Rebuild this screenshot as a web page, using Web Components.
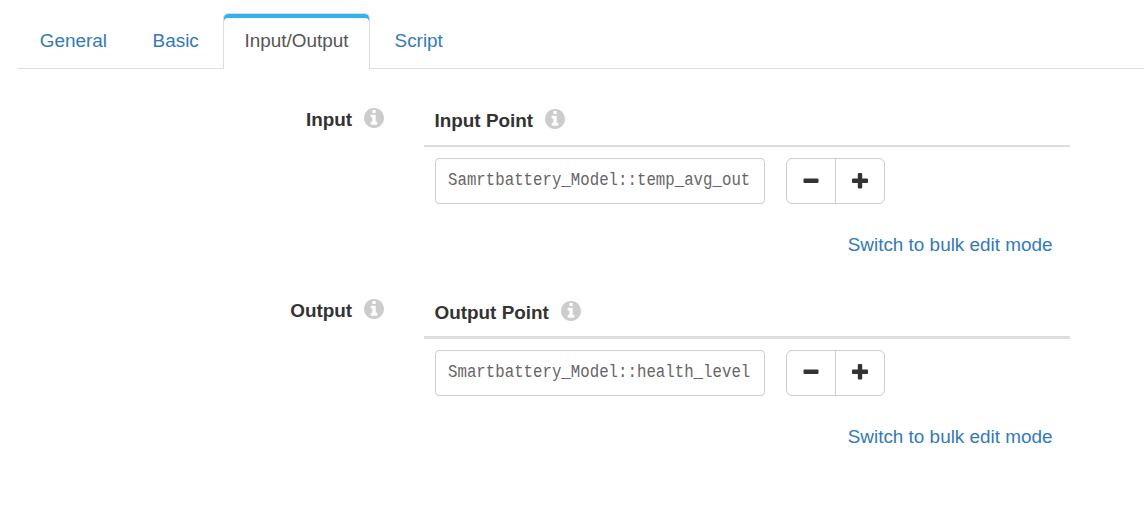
<!DOCTYPE html>
<html lang="en">
<head>
<meta charset="utf-8">
<title>Input/Output</title>
<style>
body{margin:0;background:#fff;font:18.9px/27px "Liberation Sans",Arial,sans-serif;color:#333;overflow:hidden}
</style>
</head>
<body>
<tab-bar>
  <tab-item>General</tab-item><tab-item>Basic</tab-item><tab-item active>Input/Output</tab-item><tab-item>Script</tab-item>
</tab-bar>
<point-field label="Input" heading="Input Point" value="Samrtbattery_Model::temp_avg_out"></point-field>
<point-field label="Output" heading="Output Point" value="Smartbattery_Model::health_level" style="--label-y:-1px;--rule:3px;--head:42px;--glyph-y:-1px"></point-field>
<script>
class Base extends HTMLElement{
  constructor(){super();this.attachShadow({mode:'open'})}
  connectedCallback(){this.shadowRoot.innerHTML=this.view()}
}
customElements.define('tab-bar',class extends Base{view(){return `
<style>
:host{display:flex;box-sizing:border-box;height:69px;margin-left:18px;padding-top:13px;border-bottom:1px solid #ddd;margin-bottom:36px}
</style><slot></slot>`}});
customElements.define('tab-item',class extends Base{view(){return `
<style>
:host{display:block;box-sizing:border-box;height:56px;padding:13px 20px 0 20.7px;border:1px solid transparent;border-bottom:0;margin-right:3px;color:#337ab7;white-space:nowrap}
:host([active]){color:#555;background:#fff;border-color:#ddd;border-radius:5px 5px 0 0;box-shadow:inset 0 4px #2fb5e9;padding-right:20.4px}
</style><slot></slot>`}});
customElements.define('info-icon',class extends Base{view(){return `
<style>:host{display:block;width:20px;height:20px;color:#ccc}svg{display:block}</style>
<svg width="20" height="20" viewBox="128 128 1536 1536" fill="currentColor"><path d="M1152 1376v-160q0-14-9-23t-23-9h-96v-512q0-14-9-23t-23-9h-320q-14 0-23 9t-9 23v160q0 14 9 23t23 9h96v320h-96q-14 0-23 9t-9 23v160q0 14 9 23t23 9h448q14 0 23-9t9-23zM1024 480v-160q0-14-9-23t-23-9h-192q-14 0-23 9t-9 23v160q0 14 9 23t23 9h192q14 0 23-9t9-23zM1664 896q0 209-103 385.5t-279.5 279.5-385.5 103-385.5-103-279.5-279.5-103-385.5 103-385.5 279.5-279.5 385.5-103 385.5 103 279.5 279.5 103 385.5z"/></svg>`}});
customElements.define('step-buttons',class extends Base{view(){return `
<style>
:host{display:flex;box-sizing:border-box;width:99px;height:46px;border:1px solid #ccc;border-radius:6px;overflow:hidden}
button{all:unset;display:grid;place-items:center;flex:1}
button+button{border-left:1px solid #ccc}
svg{display:block;fill:#333;margin-top:calc(2 * var(--glyph-y,0px))}
</style>
<button aria-label="Remove"><svg width="16" height="16"><rect x="0.5" y="5.5" width="15" height="4.5" rx="1"/></svg></button>
<button aria-label="Add"><svg width="16" height="16"><path d="M1 5.5h4.8V1q0-1 1-1h2.4q1 0 1 1v4.5H15q1 0 1 1V9q0 1-1 1h-4.8v4.5q0 1-1 1H6.8q-1 0-1-1V10H1q-1 0-1-1V6.5q0-1 1-1z"/></svg></button>`}});
customElements.define('point-input',class extends Base{view(){return `
<style>
:host{display:block;box-sizing:border-box;width:330px;height:46px;border:1px solid #ccc;border-radius:4px;padding:8px 11.5px;color:#666}
span{display:block;width:364px;white-space:nowrap;font:18.9px/27px "Liberation Mono","Courier New",monospace;transform:scaleX(.8333);transform-origin:0 0}
</style><span><slot></slot></span>`}});
customElements.define('point-field',class extends Base{view(){const a=n=>this.getAttribute(n);return `
<style>
:host{display:grid;grid-template-columns:384px 646px;column-gap:40px;height:192px}
.label,.head{display:flex;font-weight:bold;box-sizing:border-box}
.label{justify-content:flex-end;gap:11.5px;padding:calc(1px + var(--label-y,0px)) .4px 0 0}
.label info-icon{margin-top:2px}
.head{height:var(--head,42px);padding:2px 0 0 10.5px;gap:12px;border-bottom:var(--rule,2px) solid #ddd}
.head info-icon{margin-top:2px}
.row{display:flex;gap:21px;padding:11px 0 0 11px}
.foot{text-align:right;padding:27px 17.5px 0 0;color:#337ab7}
</style>
<div class="label"><span>${a('label')}</span><info-icon></info-icon></div>
<div>
<div class="head"><span>${a('heading')}</span><info-icon></info-icon></div>
<div class="row"><point-input>${a('value')}</point-input><step-buttons></step-buttons></div>
<div class="foot"><a>Switch to bulk edit mode</a></div>
</div>`}});
</script>
</body>
</html>
